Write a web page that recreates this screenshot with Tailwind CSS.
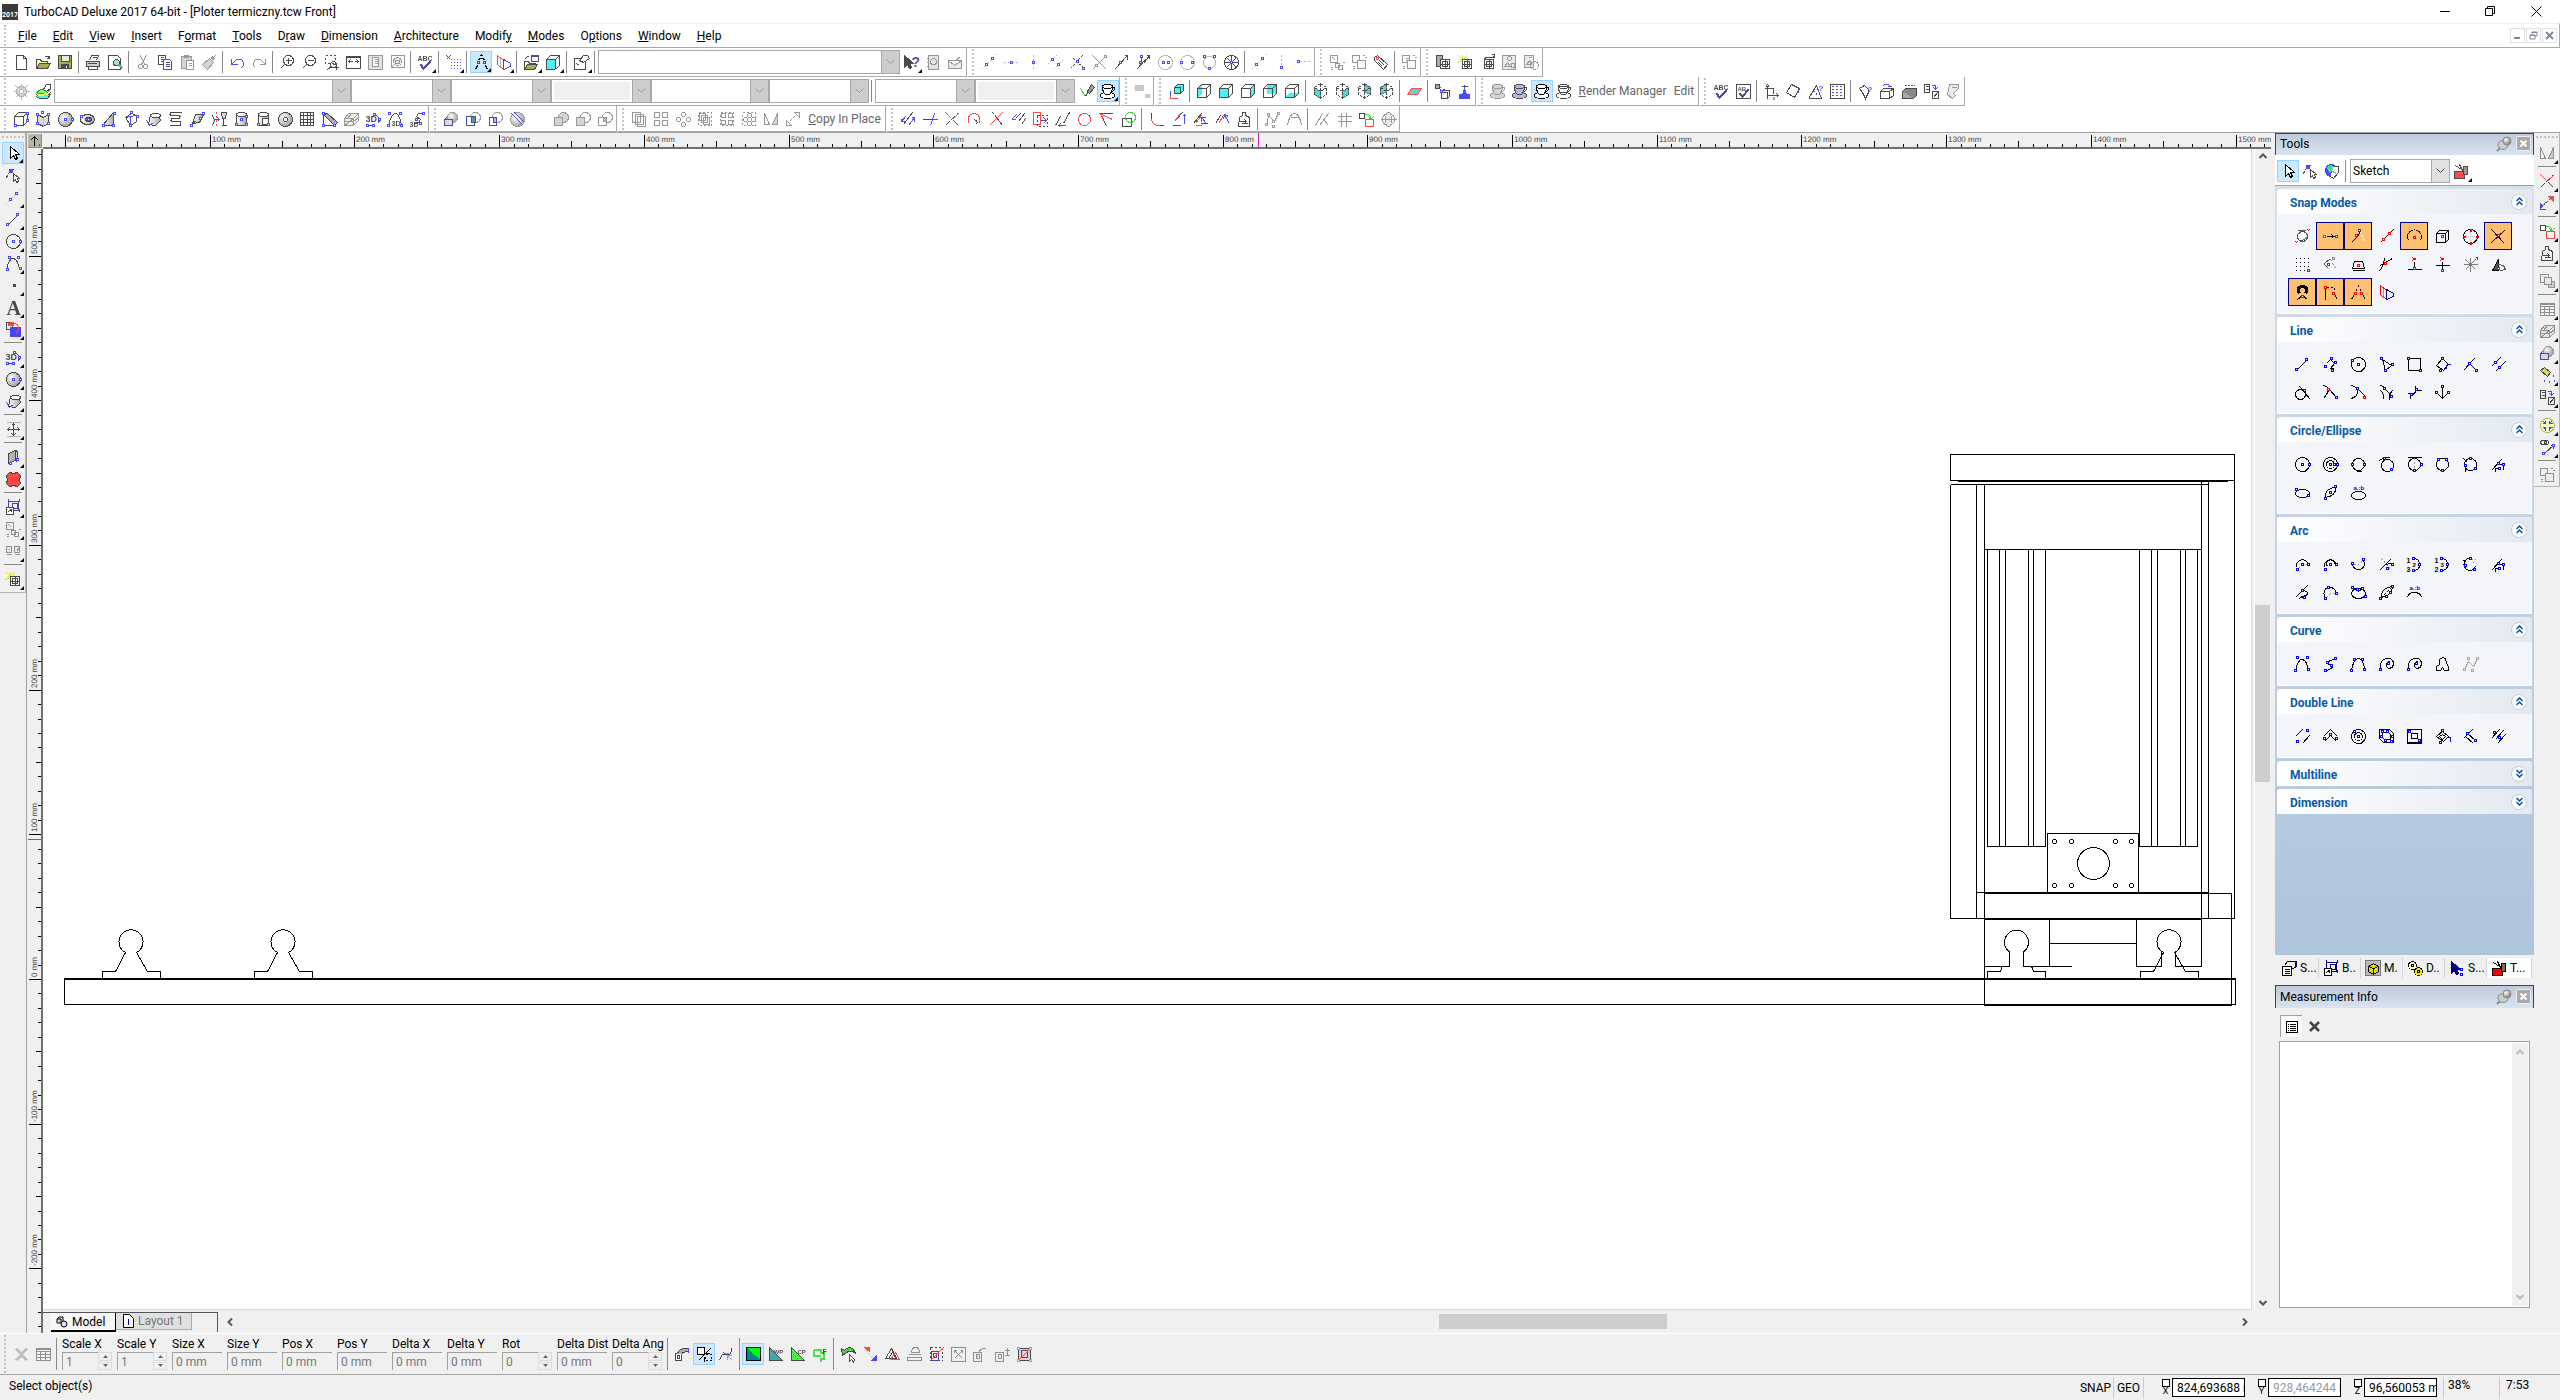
<!DOCTYPE html>
<html lang="en">
<head>
    <meta charset="UTF-8">
    <meta name="viewport" content="width=device-width, initial-scale=1.0">
    <title>TurboCAD Deluxe 2017 64-bit - [Ploter termiczny.tcw Front]</title>
    <script src="https://cdn.jsdelivr.net/npm/@tailwindcss/browser@4"></script>
</head>
<body class="h-screen flex flex-col overflow-hidden bg-[#f0f0f0] text-black text-[12px] leading-4 font-['Roboto','Open_Sans',sans-serif]">

    <svg class="absolute size-0" aria-hidden="true">
        <defs>
            <radialGradient id="ball" cx=".35" cy=".35" r=".7"><stop offset="0" stop-color="#fff"/><stop offset="1" stop-color="#777"/></radialGradient>
            <linearGradient id="steel"><stop offset="0" stop-color="#fff"/><stop offset="1" stop-color="#888"/></linearGradient>
        </defs>
    </svg>

    <!-- Title bar -->
    <header class="flex items-center h-[23px] shrink-0 bg-white">
        <div class="flex items-end justify-center ml-[2px] mr-[6px] size-4 bg-[#3a3a3a] text-white text-[7px] leading-[10px] font-bold">2017</div>
        <h1 class="flex-1">TurboCAD Deluxe 2017 64-bit - [Ploter termiczny.tcw Front]</h1>
        <button class="w-[45px] flex justify-center" aria-label="Minimize"><svg class="size-[11px]" viewBox="0 0 11 11" stroke="#000"><path d="M0 5.500h10"/></svg></button>
        <button class="w-[45px] flex justify-center" aria-label="Restore"><svg class="size-[11px]" viewBox="0 0 11 11" stroke="#000" fill="none"><path d="M.5 2.500h7v7h-7zM2.500 2.500v-2h7v7h-2"/></svg></button>
        <button class="w-[47px] flex justify-center" aria-label="Close"><svg class="size-[11px]" viewBox="0 0 11 11" stroke="#000"><path d="M.5 .5l10 10M10.500 .5l-10 10"/></svg></button>
    </header>

    <!-- Menu bar -->
    <nav class="flex items-center h-[25px] shrink-0 bg-white border-t border-b border-t-[#f0f0f0] border-b-[#aaaaaa] border-r border-r-[#aaaaaa]">
        <span class="w-[10px] self-stretch flex justify-center py-px"><span class="border-l-2 border-dotted border-[#c4c4c4]"></span></span>
        <div id="menu" class="flex-1 flex">
            <button class="px-2"><u>F</u>ile</button>
            <button class="px-2"><u>E</u>dit</button>
            <button class="px-2"><u>V</u>iew</button>
            <button class="px-2"><u>I</u>nsert</button>
            <button class="px-2">F<u>o</u>rmat</button>
            <button class="px-2"><u>T</u>ools</button>
            <button class="px-2">D<u>r</u>aw</button>
            <button class="px-2"><u>D</u>imension</button>
            <button class="px-2"><u>A</u>rchitecture</button>
            <button class="px-2">Modif<u>y</u></button>
            <button class="px-2"><u>M</u>odes</button>
            <button class="px-2">O<u>p</u>tions</button>
            <button class="px-2"><u>W</u>indow</button>
            <button class="px-2"><u>H</u>elp</button>
        </div>
        <div class="flex gap-px mr-[2px]">
            <button class="size-[15px] border border-[#e0e0e0] flex items-center justify-center" aria-label="Minimize document"><svg class="size-[9px]" viewBox="0 0 9 9" stroke="#7a8797" stroke-width="2"><path d="M1 7h6"/></svg></button>
            <button class="size-[15px] border border-[#e0e0e0] flex items-center justify-center" aria-label="Restore document"><svg class="size-[9px]" viewBox="0 0 9 9" stroke="#7a8797" fill="none"><path d="M1 4h5v4h-5zM1 4.500h5M3 3v-2h5v4h-2M3 1.500h5"/></svg></button>
            <button class="size-[15px] border border-[#e0e0e0] flex items-center justify-center" aria-label="Close document"><svg class="size-[9px]" viewBox="0 0 9 9" stroke="#7a8797" stroke-width="2"><path d="M1 1l7 7M8 1l-7 7"/></svg></button>
        </div>
    </nav>

    <!-- Toolbars -->
    <div class="flex h-[29px] shrink-0 bg-white">
        <div data-bar="new open save | print preview | cut- copy paste- brush- | undo redo- | zoomin zoomout zoomwin zoomext page- zoomsel- | abc^ | grid^ | compass!^ mirror^ | export^ cube^ | props^ |">
            <div data-combo class="w-[302px]"></div>
            <div data-icons="help^ book- mail-"></div>
        </div>
        <div data-bar="conline conh conv conpar conperp conx- conarr conarr2 concirc concirc2 concirc3 conhatch | conline coni conr"></div>
        <div data-bar="blk1- blk2- tag | blk3-"></div>
        <div data-bar="lib1 lib2 lib3 lib4- lib5-"></div>
    </div>
    <div class="flex h-[29px] shrink-0 bg-white">
        <div data-bar="gear- layers">
            <div data-combo class="w-[297px]"></div>
            <div data-combo class="w-[100px]"></div>
            <div data-combo class="w-[100px]"></div>
            <div data-combo="off" class="w-[100px]"></div>
            <div data-combo class="w-[118px]"></div>
            <div data-combo class="w-[100px]"></div>
            <div data-icons="|"></div>
            <div data-combo class="w-[100px]"></div>
            <div data-combo="off" class="w-[100px]"></div>
            <div data-icons="dropper cup!^"></div>
        </div>
        <div data-bar="squares-"></div>
        <div data-bar="ucs | cubeL cubeF cubeR cubeB cubeD | iso1 iso2 iso3 iso4 | plane | camera walk"></div>
        <div data-bar="cupgray- cupfill cup! cupline">
            <button class="w-[95px] text-[#666]"><u>R</u>ender Manager</button>
            <button class="w-[28px] text-[#666]">Edit</button>
        </div>
        <div data-bar="abc abcbox | axes rot rot2 halftone | turn boxup brick swap script-"></div>
    </div>
    <div class="flex h-[27px] shrink-0 bg-white border-b border-[#a0a0a0] *:pt-px">
        <div data-bar="box polybox sphere spin cone prism roll spring sweep glass cylN cylR torus mesh wedge latt- poly3d curve3d spline3d"></div>
        <div data-bar="u1 u2 u3 slice _ s1- s2- s3-"></div>
        <div data-bar="arr1- arr2- arr3- arr4- arr5- arr6- arr7- arr8-">
            <button class="w-[81px] text-[#666]"><u>C</u>opy In Place</button>
        </div>
        <div data-bar="m1 m2 m3 m4 m5 m6 m7 m8 m9 m10 m11 | f1 f2 f3 f4 f5 | f6- f7- | f8- f9- f10 f11-"></div>
    </div>

    <!-- Middle: left tools, drawing, panels, right tools -->
    <div class="flex-1 min-h-0 flex">
        <aside class="w-[26px] shrink-0">
            <div class="bg-[#f0f0f0] border-r border-b border-[#b4b4b4] pb-[2px]" data-col="cursor!^ editnode conline^ line^ circle^ curve^ point^ textA^ hatch^ | poly3d^ sphere^ roll^ | dim^ | wall^ blob^ | group^ blk1-^ pair-^ | lib2^"></div>
        </aside>

        <main class="flex-1 min-w-0 grid grid-cols-[15px_1fr_19px] grid-rows-[16px_1fr_23px] border-l border-[#a0a0a0] pl-px">
            <div class="bg-[#b5b5a5] border-r border-b border-[#888] p-px mt-px mr-px mb-px">
                <svg class="size-[12px]" viewBox="0 0 12 12" stroke="#000" fill="none"><path d="M5.500 11v-9M2 5l3.500-3.500 3.500 3.500M10 10h1"/></svg>
            </div>
            <div class="col-span-2 border-b-2 border-[#707070] overflow-hidden"><svg id="hruler" class="w-full h-[14px]" shape-rendering="crispEdges"></svg></div>
            <div class="row-span-2 border-r-2 border-[#707070] overflow-hidden"><svg id="vruler" class="w-[13px] h-full" shape-rendering="crispEdges"></svg></div>
            <div class="bg-white border-r border-b border-[#dcdcdc] overflow-hidden">
                <svg class="w-full h-full" fill="none" stroke="#000" shape-rendering="crispEdges">
                    <g transform="translate(-43 -149)">
                        <!-- long bed -->
                        <path stroke-width="2" d="M64 979H2236"/>
                        <path d="M64.500 979V1004.500H2235.500V979"/>
                        <!-- rails -->
                        <g id="rail"><path d="M125.500 952.500A12 12 0 1 1 136.500 952.500L147.500 971.500H160.500V979M125.500 952.500L115.500 971.500H102.500V979"/></g>
                        <use href="#rail" x="152"/>
                        <use href="#rail" x="2038"/>
                        <!-- gantry top -->
                        <path d="M1950.500 454.500H2234.500V480.500H1950.500zM1951 484.500H2208M1950.500 485V918.500H2234.500V480M1976.500 484V918M1984.500 484V1005M2201.500 480V966M2208.500 480V918"/>
                        <path stroke-width="2" d="M1958 481H2228M1984 893H2208M1984 919H2201M1984 1005H2232"/>
                        <path d="M1976 892.500H1984M2208 893.500H2231.500V1005M1984 549.500H2201"/>
                        <!-- profiles -->
                        <path d="M1987.500 549V846.500H2045.500V549M1999.500 549V846M2005.500 549V846M2028.500 549V846M2033.500 549V846"/>
                        <path d="M2139.500 549V846.500H2197.500V549M2151.500 549V846M2157.500 549V846M2180.500 549V846M2185.500 549V846"/>
                        <!-- motor -->
                        <path d="M2047.500 833.500H2138.500V892H2047.500z"/>
                        <circle cx="2093.500" cy="863.500" r="16"/>
                        <g><circle cx="2054.500" cy="841.500" r="2"/><circle cx="2071.500" cy="841.500" r="2"/><circle cx="2115.500" cy="841.500" r="2"/><circle cx="2131.500" cy="841.500" r="2"/><circle cx="2054.500" cy="885.500" r="2"/><circle cx="2071.500" cy="885.500" r="2"/><circle cx="2115.500" cy="885.500" r="2"/><circle cx="2131.500" cy="885.500" r="2"/></g>
                        <!-- carriages -->
                        <path d="M2049.500 919V966M2136.500 919V966.500H2161.500V952M2201.500 966.500H2175.500V952M2049 943.500H2136"/>
                        <path d="M1984 966.500H2009.500V952A12 12 0 1 1 2023.500 952V966.500H2072M2002.500 966L2000.500 971.500H1987.500V979M2031.500 966L2033.500 971.500H2045.500V979"/>
                    </g>
                </svg>
            </div>
            <div class="flex flex-col items-center ml-[2px] mr-px bg-[#f0f0f0] border-l border-white">
                <svg class="w-[8px] h-[15px] shrink-0" viewBox="0 0 8 15" fill="none" stroke="#555" stroke-width="2"><path d="M.5 9L4 5.500 7.500 9"/></svg>
                <div class="basis-[441px]"></div>
                <div class="w-full basis-[177px] bg-[#cdcdcd]"></div>
                <div class="flex-1"></div>
                <svg class="w-[8px] h-[15px] shrink-0" viewBox="0 0 8 15" fill="none" stroke="#555" stroke-width="2"><path d="M.5 6L4 9.500 7.500 6"/></svg>
            </div>
            <div class="col-span-2 flex items-start pt-[2px]">
                <div class="flex items-start h-[20px] w-[175px] border-t border-r border-[#555] pl-[8px]" role="tablist">
                    <button role="tab" class="flex items-center gap-[4px] h-[19px] w-[65px] pl-[5px] bg-[#f6f6f6] border-b-2 border-r border-black">
                        <svg class="size-[12px]" viewBox="0 0 12 12" stroke="#000" fill="#ddd"><path d="M1 3l2-2h4v4l-2 2h-4zM1 3h4v4"/><circle cx="8" cy="8" r="3"/></svg>Model</button>
                    <button role="tab" class="flex items-center gap-[4px] h-[17px] w-[76px] pl-[7px] bg-[#e0e0e0] border-b border-r border-[#aaa] text-[#777]">
                        <svg class="w-[11px] h-[14px]" viewBox="0 0 11 14" stroke="#000" fill="#fff"><path d="M.5 .5h6l4 4v9h-10z"/><path stroke="#00c" d="M5.500 5v6"/></svg>Layout 1</button>
                </div>
                <div class="flex-1 flex items-center h-[19px] pl-[7px] pr-[21px]">
                    <svg class="w-[10px] h-[8px]" viewBox="0 0 10 8" fill="none" stroke="#555" stroke-width="2"><path d="M7 .5L3.500 4 7 7.500"/></svg>
                    <div class="grow-[1203]"></div>
                    <div class="w-[228px] h-[15px] bg-[#cdcdcd]"></div>
                    <div class="grow-[572]"></div>
                    <svg class="w-[10px] h-[8px]" viewBox="0 0 10 8" fill="none" stroke="#555" stroke-width="2"><path d="M3 .5L6.500 4 3 7.500"/></svg>
                </div>
            </div>
        </main>

        <aside class="w-[263px] shrink-0 pl-[4px] flex flex-col">
            <!-- Tools panel -->
            <section class="flex flex-col">
                <div class="flex items-center h-[22px] pl-[4px] pr-[2px] pb-[2px] border-t border-x border-[#444] bg-linear-to-b from-[#bccadb] to-[#d9e4f0]">
                    <h2 class="flex-1">Tools</h2>
                    <div data-head></div>
                </div>
                <div class="flex items-center h-[31px] pl-[2px] pt-[2px] bg-white border-b border-[#a0a0a0]">
                    <div data-icons="cursor! editnode world |"></div>
                    <div data-combo="Sketch" class="w-[100px] ml-px"></div>
                    <div data-icons="bag^"></div>
                </div>
                <div id="groups" class="flex flex-col gap-[3px] px-[2px] pt-[3px] pb-[141px] bg-linear-to-b from-[#d6dfea] to-[#afc5dc]"></div>
            </section>
            <div id="ptabs" class="flex pl-[2px] pt-[3px] h-[28px] shrink-0" role="tablist"></div>
            <!-- Measurement panel -->
            <section class="flex-1 flex flex-col pt-[2px] pb-[25px]">
                <div class="flex items-center h-[23px] pl-[4px] pr-[2px] pb-px border-t border-x border-[#444] bg-linear-to-b from-[#bccadb] to-[#d9e4f0]">
                    <h2 class="flex-1">Measurement Info</h2>
                    <div data-head></div>
                </div>
                <div class="flex items-center pl-[5px] pt-[6px] pb-[3px]">
                    <button class="size-[22px] flex items-center justify-center bg-[#f8f8f8] border-t border-l border-[#a0a0a0]" aria-label="List"><svg class="size-[12px]" viewBox="0 0 12 12" fill="none" stroke="#000" shape-rendering="crispEdges"><path d="M.5 .5h11v11h-11zM2 3.500h1M4 3.500h6M2 5.500h1M4 5.500h6M2 7.500h1M4 7.500h6M2 9.500h1M4 9.500h6"/></svg></button>
                    <button class="size-[24px] flex items-center justify-center" aria-label="Clear"><svg class="size-[11px]" viewBox="0 0 11 11" stroke="#444" stroke-width="2.500"><path d="M1 1l9 9M10 1l-9 9"/></svg></button>
                </div>
                <div class="flex-1 flex ml-[4px] mr-[4px] bg-white border border-[#a0a0a0]">
                    <textarea class="flex-1 resize-none outline-none" aria-label="Measurement Info"></textarea>
                    <div class="w-[16px] mr-px my-px py-[6px] bg-[#f0f0f0] flex flex-col items-center justify-between">
                        <svg class="w-[8px] h-[6px]" viewBox="0 0 8 6" fill="none" stroke="#bbb" stroke-width="2"><path d="M.5 5L4 1.500 7.500 5"/></svg>
                        <svg class="w-[8px] h-[6px]" viewBox="0 0 8 6" fill="none" stroke="#bbb" stroke-width="2"><path d="M.5 1L4 4.500 7.500 1"/></svg>
                    </div>
                </div>
            </section>
        </aside>

        <aside class="w-[26px] shrink-0">
            <div class="border-r border-b border-[#b4b4b4]" data-col="arr7-^ | m3^ swapc^ | f10^ f5^ | back-^ | table-^ latt-^ u1^ torch^ swap^ | snapin^ route^ | blk2-"></div>
        </aside>
    </div>

    <!-- Inspector bar -->
    <div class="flex items-center h-[42px] shrink-0 border-t border-t-white border-b border-b-[#a8a8a8]">
        <span class="w-[10px] self-stretch flex justify-center py-px"><span class="border-l-2 border-dotted border-[#c4c4c4]"></span></span>
        <div data-icons="del- table-"></div>
        <span class="w-px h-[32px] ml-[2px] mr-[5px] bg-[#888]"></span>
        <form id="fields" class="flex self-start pt-[2px]"></form>
        <span class="w-px h-[32px] mr-[3px] bg-[#888]"></span>
        <div data-icons="e1 e2! e3"></div>
        <span class="w-px h-[32px] mx-[2px] bg-[#888]"></span>
        <div data-icons="w1! w2 w3 w4"></div>
        <span class="w-px h-[32px] mx-[3px] bg-[#888]"></span>
        <div data-icons="k1 k2 k3 k4- k5 k6- k7- k8- k9"></div>
    </div>

    <!-- Status bar -->
    <footer class="flex items-center h-[25px] shrink-0 pl-[9px]">
        <span class="flex-1 pb-[3px]">Select object(s)</span>
        <button class="h-[22px] w-[36px] border-r border-[#ccc]">SNAP</button>
        <button class="h-[22px] w-[30px] border-r border-[#ccc]">GEO</button>
        <div id="coords" class="flex gap-[12px] ml-[17px] mr-[6px]"></div>
        <span class="h-[22px] w-[56px] pl-[4px] border-l border-[#ccc]">38%</span>
        <span class="h-[22px] w-[61px] pl-[6px] border-l border-[#ccc]">7:53</span>
    </footer>

<script>
    const p = (d, c = '#000', f = 'none', x = '') => `<path d="${d}" stroke="${c}" fill="${f}" ${x}/>`;
    const dash = (d, c = '#000') => p(d, c, 'none', 'stroke-dasharray="2 2"');
    const c = (x, y, r, s = '#000', f = 'none') => `<circle cx="${x}" cy="${y}" r="${r}" stroke="${s}" fill="${f}"/>`;
    const el = (x, y, rx, ry, s = '#000', f = 'none') => `<ellipse cx="${x}" cy="${y}" rx="${rx}" ry="${ry}" stroke="${s}" fill="${f}"/>`;
    const t = (x, y, s, z = 6, f = '#000') => `<text x="${x}" y="${y}" font-size="${z}" fill="${f}" font-weight="bold" font-family="Liberation Sans, sans-serif">${s}</text>`;
    // small square handles at each x,y pair
    const n = (pts, col = '#00f') => pts.split(' ').map(s => { const [x, y] = s.split(','); return p(`M${x - 1} ${y - 1}h2v2h-2z`, col, '#fff'); }).join('');
    const R = '#f00', B = '#00f', G = '#999', N = '#000080', C = '#0ee';
    const cubeBase = p('M1 5h9v9h-9zM1 5l4-4h9v9l-4 4M10 5l4-4');
    const cupBase = f => el(7, 12, 7, 3, '#000', f) + p('M2 3q0 6 3 8h4q3-2 3-8z', '#000', f) + el(7, 3, 5, 2, '#000', f) + p('M12 4q3 0 2 2t-4 3');
    const blocks = p('M1 1h7v7h-7z') + p('M6 6h8v8h-8z', '#000', '#eee') + p('M11 1h2M1 12h2M1 14h2M13 3h2');
    const target = p('M5 5h9v9h-9z', '#000', '#fff') + c(9.500, 9.500, 3) + p('M10 5v9M5 10h9');
    const iso = f => p(f, '#088', '#0cc') + p('M8 0l6 4v7l-6 4-6-4v-7zM8 0v15M2 4l6 4 6-4', '#000', 'none', 'stroke-dasharray="3 1"');

    const icons = {
        cursor: p('M5 1v12l3-3 2 4 2-1-2-4h4z', '#000', '#fff'),
        new: p('M3 1h7l3 3v11h-10zM10 1v3h3', '#000', '#fff'),
        open: p('M1 14v-9h4l1 2h6v3', '#000', '#ff9') + p('M1 14l3-5h11l-3 5z', '#000', '#880') + p('M9 3q3-3 5 1M14 1v3h-3'),
        save: p('M1 1h13v13h-13z', '#000', '#880') + p('M4 1h8v6h-8z', '#000', '#ddd') + p('M4 10h7v4h-7z', '#000', '#000') + p('M9 11v2', '#fff'),
        print: p('M4 6l2-5h7l-2 5', '#000', '#fff') + p('M1 7h13v5h-13z', '#000', '#bbb') + p('M3 12v3h9v-3M7 3h4M2 9h9', '#000', '#fff'),
        preview: p('M1 1h9l3 3v11h-12z', '#000', '#fff') + c(9, 8, 3, '#000', '#8cc') + p('M11 10l4 4', '#088', 'none', 'stroke-width="2"'),
        cut: p('M5 1l4 9M11 1l-5 9') + c(5, 12, 2) + c(10, 12, 2),
        copy: p('M1 1h7v9h-7z', '#000', '#fff') + p('M6 5h6l2 2v8h-8z', N, '#fff') + p('M3 3h3M3 5h2M3 7h2M8 8h4M8 10h4M8 12h4', N),
        paste: p('M2 2h10v12h-10z', '#000', '#999') + p('M5 1h4v2h-4z') + p('M7 6h7v9h-7z', '#000', '#fff') + p('M9 9h3M9 11h3'),
        brush: p('M14 1l-4 4M8 4l4 4-6 7-5-5z', '#000', '#999') + p('M10 5l2-2', '#000', 'none', 'stroke-width="3"'),
        undo: p('M2 4v6h6M2 10l5-5q6-2 7 4q0 3-2 4', B),
        redo: p('M14 4v6h-6M14 10l-5-5q-6-2-7 4q0 3 2 4'),
        zoomin: c(9, 6, 5) + p('M5 10l-4 4M6 6h6M9 3v6'),
        zoomout: c(9, 6, 5) + p('M5 10l-4 4M6 6h6'),
        zoomwin: dash('M2 1h10v8h-10z') + c(10, 10, 3) + p('M8 12l-4 3M9 10h3M13 11v4M11 13h4'),
        zoomext: p('M1 2h14v12h-14z', '#000', '#fff') + p('M1 3h14', '#000') + p('M3 7h4M5 5l-2 2 2 2M13 7h-4M11 5l2 2-2 2', N),
        page: p('M1 1h14v14h-14z', '#000', '#bbb') + p('M5 3h6v9h-6z', '#000', '#fff') + p('M7 5h3M7 7h3M7 9h3'),
        zoomsel: p('M2 1h13v12h-13z') + c(8, 7, 4, '#000', '#ccc') + p('M5 10l-4 4M6 6h4v3h-4z'),
        abc: t(0, 6, 'ABC', 7) + p('M3 10l3 4 7-7', N, 'none', 'stroke-width="2"'),
        abcbox: p('M1 1h14v14h-14z') + t(2, 7, 'AB', 6) + p('M4 10l3 3 6-7', N, 'none', 'stroke-width="2"'),
        grid: p('M1 1l4 4M5 1l-4 4') + [4, 7, 10, 13].map(y => p(`M5 ${y + 1}h11`, B, 'none', 'stroke-dasharray="1 2"')).join(''),
        compass: dash('M8 0l-4 8M8 0l4 8') + p('M4 11l-2 4M12 11l2 4M6 4h4') + n('5,8 11,8', R),
        mirror: p('M2 1l6 5v9l-6-5z', R) + p('M5 4v8', G) + p('M8 5l7 4v3l-7 3z', N),
        export: p('M8 1h7v6h-7z', N, '#fff') + p('M8 2h7', N) + p('M1 14v-7h4l1 2h6v2', '#000', '#ff9') + p('M1 15l3-5h10l-3 5z', '#000', '#880') + p('M2 5q1-4 4-3'),
        cube: p('M1 5h9v10h-9z', '#000', C) + p('M1 5l4-4h9l-4 4zM14 1v10l-4 4', '#000', '#fff'),
        props: p('M1 4h11v11h-11z', '#000', '#fff') + p('M6 6l4-5h4l2 3-6 4z', '#000', '#fff') + p('M3 9l3 2'),
        help: p('M1 1v12l3-3 2 4 2-1-2-4h4z', '#000', '#000') + t(8, 12, '?', 14, N),
        book: p('M3 1h10v14h-10z', '#000', '#bbb') + c(8, 7, 3) + p('M3 4h-2M3 8h-2M3 12h-2'),
        mail: p('M1 6h13v8h-13zM1 6l6 5 7-5M8 6l5-4', '#000', '#ccc'),
        conline: dash('M0 15L15 0', G) + n('5,10 11,4'),
        conh: dash('M0 8h16', G) + n('8,8'),
        conv: dash('M8 0v16', G) + n('8,8'),
        conpar: dash('M0 10l9-9M6 15l9-9', G) + n('5,5 11,10'),
        conperp: dash('M1 14L13 1M4 4l10 9') + n('8,7 14,14'),
        conx: p('M1 1l14 14M15 1l-14 14') + n('5,11 14,2', '#000'),
        conarr: p('M1 15L14 1M14 5v-4h-3') + n('7,8'),
        conarr2: p('M1 15L10 5M6 2v8M14 1l-6 8M14 4v-3h-3') + n('6,2 5,8'),
        concirc: c(8, 8, 7, G) + n('6,8 11,8'),
        concirc2: c(8, 8, 7, G) + n('2,8 13,8'),
        concirc3: c(8, 8, 6, G) + n('3,2 13,2 8,14'),
        conhatch: c(8, 8, 7) + p('M3 3l10 10M13 3l-10 10M8 1v14M1 8h14') + n('8,8'),
        coni: dash('M8 0v16', G) + n('8,13'),
        conr: dash('M4 7h12', G) + n('3,7'),
        blk1: p('M1 1h7v7h-7zM3 3l3 3') + p('M6 9h4v4h-4zM9 11h4v4h-4z') + p('M1 13h2M1 15h2M13 8h2'),
        blk2: blocks, blk3: blocks + p('M4 4h3M4 6h2'),
        tag: p('M1 3l3-2 10 9-4 5-9-9z', '#000', '#fff') + c(4, 4, 1, R) + p('M6 6l5 5M5 8l4 4'),
        lib1: p('M1 1h6v11h-6z', '#000', '#888') + target,
        lib2: p('M1 1l5 5M5 0v4M1 5h4M9 1l-3 4M0 8l4-2', '#dd0') + target,
        lib3: target + p('M5 5l1-2h8l1-2M12 0h3v3', '#000'),
        lib4: p('M1 1h13v14h-13z', '#000', '#ccc') + c(8, 4, 2) + p('M3 12l3-4 3 4zM10 9h3v4h-3z'),
        lib5: p('M1 1h9v12h-9z', '#000', '#ccc') + c(11, 11, 4) + p('M3 10l3-4 2 4zM5 3h3'),
        gear: c(8, 8, 5, '#444', '#998') + c(8, 8, 2, '#444', '#fff') + p('M8 0v3M8 13v3M0 8h3M13 8h3M2 2l3 3M14 2l-3 3M2 14l3-3M14 14l-3-3', '#444'),
        layers: p('M1 9l4-3h10l-4 4h-8z', '#060', '#3f3') + p('M1 11l2 2h9l3-4', '#000', '#ff0') + p('M1 13l3 2h8l3-4', '#000', C) + p('M8 6l3-5h4v4l-4 3z', '#000', '#fff'),
        dropper: p('M2 5l5 8', '#0b0') + p('M7 13l3-5') + p('M9 8l4-7 3 3-5 6z', '#000', '#777'),
        cup: cupBase('#fff'), cupgray: cupBase('#999'), cupfill: cupBase('#99c'), cupline: cupBase('none'),
        squares: p('M1 2h8v5h-8z', '#777', '#777') + p('M11 11h4v3h-4z', '#777', '#777'),
        ucs: p('M6 4h6v6h-6zM6 4l3-3h6v6l-3 3', '#000', C) + p('M2 7v8h7', R) + p('M2 7v4', B),
        cubeL: p('M1 5l4-4v9l-4 4z', C, C) + cubeBase,
        cubeF: p('M1 5h9v9h-9z', C, C) + cubeBase,
        cubeR: cubeBase + p('M10 5l4-4v9l-4 4z', '#000', C),
        cubeB: p('M5 1h9v9h-9z', C, C) + cubeBase,
        cubeD: p('M1 14l4-4h9l-4 4z', C, C) + cubeBase,
        iso1: iso('M2 4l6 4v7l-6-4z'), iso2: iso('M8 8l6-4v7l-6 4z'), iso3: iso('M8 1l6 3v7l-6-3z'), iso4: iso('M2 4l6-3v7l-6 3z'),
        plane: p('M1 11l4-6h10l-4 6z', R, '#0cc'),
        camera: p('M1 1h4v4h-4zM5 5l4 4', '#000', '#888') + dash('M5 3l9 6', B) + p('M7 9h6v6h-6zM7 9l2-2h6v6l-2 2', '#000', '#eee') + n('7,8'),
        walk: p('M8 1v5M5 3h6', '#000') + p('M8 5l-2 6h-3v4h10v-4h-3z', B, B),
        axes: p('M4 15v-13M2 4l2-3 2 3M1 5h9v5M4 12h11M13 10l2 2-2 2') + t(9, 16, 'x', 5, B),
        rot: p('M1 9l5-8 8 4-5 9z') + dash('M12 10q4-4 1-7', B),
        rot2: p('M1 15h13M1 15l8-13 5 13') + dash('M5 8q4 0 5 6', B) + t(11, 7, '?', 8, B),
        halftone: p('M1 1h14v14h-14z', '#000', '#ffd') + [3, 6, 9, 12].map(y => dash(`M2 ${y}h12`, B)).join(''),
        turn: p('M2 5l5-3 4 4v3l-3 6-3-6z') + t(10, 8, '?', 8, B),
        boxup: p('M1 8h9v7h-9zM1 8l3-3h10v7l-4 3M10 8l4-3') + p('M4 2q4-3 7 1M8 3h4', B),
        brick: p('M1 8h11v7h-11z', '#000', '#888') + p('M1 8l3-3h11v7l-3 3', '#000', '#555') + p('M3 2h10', B, 'none', 'stroke-dasharray="2 1"'),
        swap: p('M1 1h5v8h-5zM2 3h3M2 6h3') + p('M9 8h6v7h-6zM10 14l4-5') + p('M8 2h4v4M10 4l2 2 2-2', B),
        script: p('M4 1h9v4l-5 5 2 2-3 3-5-4z', '#000', '#ccc') + p('M6 4h5'),
        box: p('M1 5h9v9h-9z', '#000', '#fff') + p('M1 5l4-4h9v9l-4 4M10 5l4-4') + n('2,14 14,2 14,9'),
        polybox: p('M2 3l6 3 5-3v9l-5 3-6-3z', '#000', '#ccc') + p('M8 6v9', C) + n('2,3 13,3 2,12 13,12 7,1'),
        sphere: c(8, 8, 7, '#000', 'url(#ball)') + n('8,8 15,8'),
        spin: el(8, 8, 7, 5, '#000', 'url(#steel)') + el(9, 8, 3, 2, '#000', '#555') + n('2,5 9,8'),
        cone: p('M1 14l11-13v13z', '#000', 'url(#steel)') + n('13,2 12,14 2,14'),
        prism: p('M2 6l5 8 6-4v-6l-5-2z', '#000', '#fff') + p('M2 6l5-1 6-1M7 14v-9', B) + n('8,1 14,5 7,14'),
        roll: p('M5 3l8 1 2 5-5 5-7-1z', '#000', 'url(#steel)') + el(10, 4, 5, 2, '#000', '#fff') + p('M1 9l3 5 4-3', B),
        spring: p('M14 1h-11v3h9v3h-8v3h9v4h-11M2 2v1M12 5h1M3 8v1'),
        sweep: p('M6 3h8l-4 8-7 1z', '#000', 'url(#steel)') + p('M3 12l4-3') + n('14,2 2,14 11,7'),
        glass: dash('M5 0v16', R) + p('M10 1h5l-1 6h-3zM12 7v7M10 14h5M1 4l2 5-2 5', '#000', '#ccc') + p('M3 8h5M6 6l2 2-2 2', B),
        cylN: p('M3 3v10q5 3 10 0v-10', '#000', 'url(#steel)') + el(8, 3, 5, 2, '#000', '#fff') + n('8,8 13,5 13,13 3,13'),
        cylR: p('M3 3v10q5 3 10 0v-10', '#000', 'url(#steel)') + el(8, 3, 5, 2, '#000', '#fff') + p('M7 7h6v6h-6z', '#000', '#fff') + n('13,13 3,13'),
        torus: c(8, 8, 7, '#000', 'url(#ball)') + c(8, 8, 2, '#000', '#fff'),
        mesh: p('M1 1h13v13h-13zM4 1v13M8 1v13M11 1v13M1 4h13M1 8h13M1 11h13'),
        wedge: p('M2 3l11 11h-11z', '#000', '#fff') + p('M2 3l4-1 10 9-3 3', '#000', '#888') + n('2,2 2,14 13,14'),
        latt: p('M1 7h9v7h-9zM1 7l4-5h10v7l-5 5M10 7l5-5M1 10h9l5-4M4 7l4-5M1 14l9-7', '#000', '#ddd'),
        poly3d: t(0, 10, '3D', 9) + p('M2 14h6M10 3l5 5-3 4') + n('2,14 8,14 14,8 9,3'),
        curve3d: p('M1 14Q4 2 8 2T14 14') + t(4, 14, '3D', 7) + n('1,14 14,14 2,2 13,2'),
        spline3d: p('M14 2h-5l-2 3 4 3-2 3-4 1') + t(0, 15, '3D', 7) + n('14,2 7,8 11,12'),
        u1: p('M1 14v-6l4-4h8', '#000', '#ccd') + c(9, 6, 5, '#777', 'url(#ball)') + p('M1 8h8v6h-8z', N, '#ccd'),
        u2: c(10, 6, 5, '#777', '#fff') + p('M1 5h8v9h-8z', N, '#fff') + p('M6 5h4v6h-4z', N, '#077'),
        u3: c(10, 6, 5, '#777', '#fff') + p('M2 6h7v8h-7z', N, '#fff') + p('M6 6h3v5h-3z', N, '#99f'),
        slice: c(8, 8, 7, '#777', 'url(#ball)') + p('M2 2l12 12M5 1l10 10', N) + p('M3 1l12 13', '#fff'),
        s1: c(10, 6, 5, '#000', '#999') + p('M1 6h8v8h-8z', '#000', '#999'),
        s2: c(10, 6, 5) + p('M1 6h8v8h-8z', '#000', '#999'),
        s3: c(10, 6, 5) + p('M1 6h8v8h-8z', '#000', '#fff') + p('M6 6h3v4h-3z', '#000', '#555'),
        arr1: p('M1 1h8v10h-8zM4 3h8v10h-8zM6 5h8v10h-8z'),
        arr2: p('M1 1h5v5h-5zM9 1h5v5h-5zM1 9h5v5h-5zM9 9h5v5h-5z'),
        arr3: c(8, 3, 2) + c(3, 8, 2) + c(13, 8, 2) + c(8, 13, 2),
        arr4: dash('M1 1h13v13h-13z') + p('M2 2h6v7h-6zM4 4h6v7h-6zM6 6h6v7h-6z', '#000', '#fff'),
        arr5: dash('M1 1h13v13h-13z') + p('M2 2h4v4h-4zM9 2h4v4h-4zM2 9h4v4h-4zM9 9h4v4h-4z'),
        arr6: dash('M1 1h13v13h-13z') + c(8, 4, 2) + c(4, 8, 2) + c(12, 8, 2) + c(8, 12, 2) + c(8, 8, 2),
        arr7: p('M1 2v11h5zM1 2l5 11') + p('M14 2v11h-5z', '#000', '#999'),
        arr8: p('M1 9l5 5h-5zM9 1l5 5v-5z') + dash('M2 12l10-10'),
        m1: p('M3 13l9-12') + p('M1 10l4-5M8 14l6-8M1 7v3h3M14 10v-4h-3', B),
        m2: p('M0 8h10') + p('M8 14l4-12M9 8h6', B),
        m3: p('M9 9l5 5') + p('M1 1l6 6', R) + p('M1 14L13 2', '#000', 'none', 'stroke-dasharray="6 2"') + p('M8 8l6-6', R),
        m4: p('M3 12A6 6 0 1 1 12 12', R) + p('M8 8q4 2 2 5'),
        m5: dash('M4 1l4 5') + p('M8 6l6 8') + p('M14 1L1 14', R),
        m6: p('M5 7l5-5M8 10l6-8M11 13l4-6') + p('M1 8h4M1 8l5-5', B),
        m7: p('M1 1h7v12h-7z', R) + dash('M5 4h10v11h-10z') + p('M8 9h6M11 6l3 3-3 3', N),
        m8: p('M1 14l5-9M9 12l6-11') + p('M4 14h7M6 12l-2 2 2 2', B),
        m9: c(8, 8, 6, R) + p('M13 4l1 3'),
        m10: p('M2 2h12M4 6l4 9', '#000') + p('M1 2l13 6M2 2l3 6', R),
        m11: p('M2 7h9v8h-9z') + c(10, 6, 5, '#0b0'),
        f1: p('M3 1v7', '#000') + p('M3 8q1 6 8 6', R) + p('M11 14h4'),
        f2: p('M4 10l8-9M2 14h8', '#000') + p('M4 10l6-8', R) + p('M14 3v9M12 5l2-2 2 2M3 14h7', B),
        f3: p('M1 12l8-10M8 12h7', '#000') + p('M3 12l6-8M3 14h6', R) + p('M14 12l-5-6M9 10v-4h4', B),
        f4: p('M1 12l5-8') + p('M4 12l5-8', R) + p('M15 12l-4-7M9 8l1-5 4 2', B),
        f5: p('M3 6l3-2v-3h3v3l4 2v9h-11zM3 10h7M8 8l2 2-2 2') + p('M5 12h6'),
        f6: p('M2 14l2-10 6 6 4-8') + n('4,3 2,13 9,10 14,2 9,15'),
        f7: p('M1 14Q3 2 8 2T15 14M4 6h8'),
        f8: p('M1 14l7-12M5 14l9-12M9 8l5 6'),
        f9: p('M5 1v14M10 1v14M1 5h14M1 10h14'),
        f10: p('M1 2h5v5h-5z', '#000', '#fff') + p('M7 3q5-1 5 4M10 5l2 3 3-3', '#0b0') + p('M7 8h8v7h-8z', R, '#fff'),
        f11: c(8, 8, 6) + el(8, 8, 3, 7, '#000', '#ccc') + p('M0 8h16'),
        editnode: p('M1 11Q2 5 9 1', '#000', 'none', 'stroke-dasharray="4 1"') + p('M4 2h3v3h-3z', B, B) + p('M8 6v8l2-2 1 3 2-1-1-3h2z', '#000', '#fff'),
        line: p('M3 13L13 3') + n('2,13 12,3'),
        circle: c(8, 8, 7) + n('8,8 15,8'),
        curve: p('M1 14Q4 2 8 3T14 13') + n('2,14 15,13 4,2 13,2'),
        point: c(9, 8, 1, '#000', '#000'),
        textA: `<text x="1" y="15" font-size="20" font-weight="bold" fill="#000" font-family="Liberation Serif, serif">A</text>`,
        hatch: p('M1 1h6v7h-6z') + p('M3 2h5v2h-5z', R, R) + p('M5 6h10v9h-10z', B, B) + p('M5 1q11 1 7 9l-2 3', R),
        dim: p('M1 1h14M1 15h14', G) + p('M8 2v12M2 8h12M6 4l2-2 2 2M6 12l2 2 2-2M4 6l-2 2 2 2M12 6l2 2-2 2'),
        wall: p('M3 4l7-3v10l-7 3z', '#000', '#999') + p('M10 1l2 1v9l-2 2', '#000', '#ccc') + n('5,14 12,10'),
        blob: p('M4 1l4 1 4-1 3 3-1 4 1 4-3 3-4-1-4 1-3-3 1-4-1-4z', '#000', R),
        group: p('M3 2h10v9h-10z', N) + p('M2 1h1M13 1h1M13 11h1M2 11h1', N, 'none', 'stroke-width="3"') + p('M7 4h5v5h-5z', N) + p('M1 8h7v7h-7z', '#000', '#fff') + p('M3 12l3-2M4 10h2v2'),
        pair: p('M1 3h5v6h-5zM9 3h5v6h-5zM1 11h5M9 11h5M3 6h1M11 8l3-4', '#000', '#ddd'),
        swapc: p('M1 14v-6l2 2 3-3M1 14h5z', B, B) + p('M14 1h-5l5 5z', R, R) + dash('M4 10l8-8', '#000'),
        back: p('M1 1h8v8h-8z') + p('M9 8h6v6h-6z', '#000', '#999') + p('M5 4h7v7h-7z', '#000', '#ddd'),
        table: p('M1 2h14v12h-14z', '#000', '#fff') + p('M1 5h14M1 8h14M1 11h14M5 5v9M10 5v9') + p('M1 3h14'),
        torch: p('M1 3l4-3 6 5-3 4z', '#000', '#cc3') + p('M8 9l3-4') + p('M4 13h1M9 14h1M13 8h1M14 13h1', B, 'none', 'stroke-width="2"'),
        snapin: c(8, 8, 7, '#7b0', '#ffb') + p('M3 6h3v-3M13 6h-3v-3M3 10h3v3M13 10h-3v3M4 4l2 2M12 4l-2 2M4 12l2-2M12 12l-2-2', N),
        route: el(4, 3, 3, 2) + el(7, 3, 2, 2) + p('M6 13l8-7M14 9v-3h-3') + n('4,14 14,6'),
        world: c(7, 7, 6, B, B) + p('M3 4l4-2 2 3-4 4z', '#0c6', '#0c6') + p('M9 3h5v6l-5 6-3-2', '#000', '#fff') + p('M8 8l4 2', '#0c6'),
        bag: p('M1 8h10v7h-10z', '#000', R) + p('M2 2l9 6M6 1l3 6M10 3h4v8h-4z', '#000', '#865'),
        del: p('M3 2l10 12M13 2l-10 12', '#777', 'none', 'stroke-width="3"'),
        e1: p('M1 7h6v7h-6zM3 9h2v3h-2z', '#000', '#fff') + p('M3 7q2-6 11-5v3q-6 0-7 3', '#000', '#999') + p('M14 1v5', B),
        e2: p('M1 1h7v7h-7z', '#000', '#fff') + dash('M9 8h6v6h-6z') + p('M7 7h6M8 10v5M2 14L14 2'),
        e3: p('M1 14q2-8 7-6t5-7M8 8l-3-2') + p('M6 7h4M9 9l5 5M9 13v-4h4', '#48f'),
        w1: p('M1 1h14v13h-14z', '#000', '#088') + p('M2 1h13v12z', '#0f0', '#0f0') + p('M1 1h14v13h-14z'),
        w2: p('M2 1v13h13z', '#000', '#088') + t(6, 7, 'WP', 6),
        w3: p('M2 1v13h13z', '#000', '#0e0') + t(8, 7, 'CP', 6),
        w4: p('M2 3h7v3h3v6h-3v3M2 3v6h7', '#0d0', 'none', 'stroke-width="2"') + t(11, 7, 'F', 7),
        k1: p('M1 2l1 7 4-3q5-3 9 1l-2-4q-5-4-9 1z', '#000', '#0c0') + p('M9 8v7l2-2 2 3 1-3z', '#000', '#fff'),
        k2: p('M2 1h5v4z', R, R) + p('M9 14h5v-5z', B, B) + dash('M3 4l9 9', '#cc0'),
        k3: p('M1 12l6-10 5 10zM4 12l4-6 3 5') + p('M6 13l5-7 4 7z', R),
        k4: p('M5 6q0-5 4-5t4 5h-8M2 8h12M1 11h14v3h-14z'),
        k5: dash('M2 1h12v13h-12z') + p('M3 5h7v9h-7zM5 7h3v4h-3z', N) + p('M2 14L15 1', R),
        k6: p('M1 1h14v14h-14zM4 4l8 8M12 4l-8 8M4 6v-2h2M12 6v-2h-2'),
        k7: p('M1 6h8v9h-8zM4 8h3v4h-3zM6 6q3-5 8-4M4 9l2 2'),
        k8: p('M1 6h8v9h-8zM4 8h3v4h-3zM10 4h5M10 9h5M13 1v8'),
        k9: p('M2 2h12v12h-12z', '#000', '#ccc') + p('M5 4h6v7h-6z', N) + p('M2 14L14 2', R) + n('2,2 14,2 2,14 14,14', '#48f'),

        // snap modes
        s_no: c(8, 8, 5, '#555', '#fff') + p('M3 6l6-4 4 4M6 13l7-4M3 2h8', '#555') + p('M1 13l2 2M3 13l-2 2M13 1l2 2M15 1l-2 2', R),
        s_mid: p('M4 8h8M9 6l2 2-2 2') + n('2,8', '#666') + n('14,8', R),
        s_vert: p('M1 14l7-7 2-6') + dash('M10 3l4 11', '#fff') + n('9,2', '#444') + n('6,7', R),
        s_line: p('M2 14L15 1') + n('5,11 11,5', R),
        s_arc: p('M2 12A7 7 0 1 1 14 12') + n('8,9', R),
        s_box: p('M2 5h9v9h-9zM2 5l3-3h9v9l-3 3M11 5l3-3') + n('8,8', R),
        s_quad: c(8, 8, 7) + p('M8 3v10M3 8h10', '#bbb', 'none', 'stroke-dasharray="1 1"') + p('M8 0v3M8 13v3M0 8h3M13 8h3', R, 'none', 'stroke-width="2"'),
        s_x: p('M1 1l13 14M15 1l-14 13') + n('8,7', R),
        s_grid: [2, 6, 10, 14].map(y => p(`M1 ${y}h13`, '#000', 'none', 'stroke-dasharray="1 3"')).join('') + n('14,14', R),
        s_near: p('M2 7l6-5M2 8l4 4', '#555') + dash('M8 3l6 10', '#888') + n('6,8', R) + n('11,2', '#888'),
        s_trap: p('M2 14h12M4 5h8l2 7h-12z') + n('8,9', R),
        s_tan: p('M1 14q4-3 5-12M2 9L14 2') + n('7,7', R),
        s_perp: p('M1 13h14M8 5v8') + p('M6 1l4 3M10 1l-4 3', R) + n('8,12', R),
        s_perp2: p('M1 9h14M8 5v8') + p('M6 1l4 3M10 1l-4 3', R) + n('8,14', R),
        s_star: p('M8 1v14M1 8h14M3 3l10 10M13 3l-10 10', '#777') + p('M13 1h2v2', R),
        s_surf: p('M2 14l6-11v11z', '#000', '#555') + p('M8 8l5 1 2 4-5 1', '#555', '#fff') + n('8,12', R),
        s_mag: p('M5 9q-2-3-1-5t4-2 4 2-1 5', '#000', 'none', 'stroke-width="3"') + p('M3 15l5-4 5 4') + n('8,12', R),
        s_ext: p('M3 15v-12') + dash('M4 3h8v7') + n('3,3 11,9', R) + p('M12 10l3 5'),
        s_com: dash('M8 1l-3 7M8 1l3 7') + p('M4 10l-3 5M12 10l3 5') + n('5,9 11,9', R),
        // line tools
        l_multi: p('M4 7l4-4 4 4-4 5h3') + n('3,10 9,2 13,6 10,14'),
        l_poly: c(8, 8, 7) + p('M5 15h6') + n('2,4 8,8'),
        l_tri: p('M4 3l9 6-6 5z') + n('3,2 14,8 7,14'),
        l_rect: p('M2 2h12v12h-12z') + n('2,2 14,14'),
        l_rrect: p('M8 2l6 6-5 6-7-5z') + n('8,2 6,14') + p('M12 8h4M12 8v4', B),
        l_perp: p('M1 14L12 2M7 7l6 6') + n('7,7 14,14'),
        l_par: p('M1 10l9-9M5 15l10-10') + n('5,6 9,11'),
        l_t1: c(6, 10, 5) + p('M5 2l11 13') + n('10,6'),
        l_t2: p('M1 1q5 1 5 4T1 14M7 5l7 8') + n('6,5', R) + n('14,13'),
        l_t3: p('M1 1q6 1 6 6T1 14M7 4l8 8') + n('7,4') + n('14,13', R),
        l_t4: p('M1 1q4 0 6 4M1 6q4 0 4 8M14 6q-4 4-3 10M4 2l10 10') + n('6,4 13,12'),
        l_t5: p('M9 1v4M4 15q2-6-3-6M15 6h-5l-4 5') + n('10,5 5,10'),
        l_ang: p('M8 3v11M2 8l6 6 6-6') + n('8,2 2,8 14,8'),
        // circles
        c_rad: c(8, 8, 7) + n('8,8 15,8') + p('M6 15h5'),
        c_conc: c(8, 8, 7) + c(8, 8, 4) + n('8,8 12,8 15,8'),
        c_dbl: c(8, 8, 6) + n('2,8 14,8') + p('M6 15h5'),
        c_tan: c(9, 9, 6) + p('M1 4l5-3h5') + n('6,2 13,13'),
        c_tl: p('M1 1h14') + c(8, 8, 6) + dash('M8 1v12', G) + n('15,8 8,14'),
        c_3p: c(8, 8, 6) + n('4,3 12,3 8,14'),
        c_t3: c(8, 8, 6) + p('M1 2l4 4M3 15v-4') + n('8,2 3,9 13,12'),
        c_tt: p('M1 14L11 3M8 8q7-2 5 6M5 15v-3h4') + n('8,7 13,8 9,12'),
        e_rot: el(8, 9, 7, 4) + n('2,5 14,11'),
        e_fix: p('M3 13Q2 4 13 3Q14 11 3 13z') + n('13,2 8,8 3,14'),
        e_rat: el(8, 11, 7, 4) + t(3, 5, 'a.:b', 6, B),
        // arcs
        a_rad: p('M2 11A6 6 0 1 1 14 8') + dash('M4 12l4-4h6', G) + n('3,13 8,8 14,8'),
        a_con: p('M2 11A6 6 0 1 1 14 8M5 10A4 4 0 1 1 12 8') + n('3,13 8,8 14,8'),
        a_dbl: p('M2 8A6 6 0 1 0 13 4') + dash('M3 8h5l5-4', G) + n('2,7 13,3'),
        a_tan: p('M1 14L12 3M8 8q6-2 6 1') + dash('M3 2l10 12', G) + n('14,8 9,12'),
        a_123: p('M7 2q6 0 6 6t-6 6') + t(0, 6, '1', 7) + t(0, 15, '3', 7) + t(6, 10, '2', 6) + n('7,2 13,8 7,14'),
        a_132: p('M7 2q6 0 6 6t-6 6') + t(0, 6, '1', 7) + t(0, 15, '2', 7) + t(6, 10, '3', 6) + n('7,2 13,8 7,14'),
        a_t3: p('M9 2A6 6 0 1 0 13 10M1 4l3 1') + dash('M8 3h5l-3 4', G) + n('8,2 3,9 12,13'),
        a_tp: p('M1 13L13 1M8 6q6 1 5 4l-6 3') + n('8,6 10,13') + p('M4 15l3-3'),
        a_el: p('M2 13Q0 4 6 3T14 9') + dash('M4 13l4-4h6', G) + n('6,3 3,14 14,9'),
        a_er: el(8, 9, 7, 5) + p('M3 3l5 4 4-3') + n('2,3 7,5 12,4 15,12'),
        a_ef: p('M3 13Q2 4 14 2Q14 11 3 13z') + dash('M3 13L13 3') + n('14,2 12,8 8,12 2,14'),
        a_era: p('M1 13q1-5 7-5t7 5') + t(3, 5, 'a.:b', 6, B),
        // curves
        v_1: p('M1 14Q4 2 8 3T14 13') + n('1,14 14,13 3,1 13,1'),
        v_2: p('M13 3q-6 0-7 3t4 3q0 4-7 5') + n('13,2 5,6 9,9 3,14'),
        v_3: p('M1 14Q3 2 8 2T14 13') + n('1,14 14,13 4,3 12,3'),
        v_4: p('M2 13Q1 2 9 2t5 9q-6 2-6-2t3-4') + n('2,13 10,7'),
        v_5: p('M6 14h-4v-4l3-2v-5l3-2 3 1 1 5 2 3v4h-4l-2-3z', '#000', 'none', 'stroke-linejoin="round"'),
        v_6: p('M2 13l4-8 5 5 4-8') + n('2,13 6,2 15,2 10,14', '#000'),
        // double lines
        d_1: p('M1 8l7-7M8 15l7-8') + n('13,2 3,13'),
        d_2: p('M1 8l7-7 7 7M2 13l6-6 6 6') + n('2,10 14,10 8,6'),
        d_3: c(8, 8, 7) + c(8, 8, 4) + n('4,3 8,8') + p('M5 15h6'),
        d_4: p('M1 1h10l4 4v9h-10l-4-4zM4 4h6l2 2v5h-6l-2-2z') + n('4,3 9,3 3,8 14,8 7,12 13,13'),
        d_5: p('M1 1h14v14h-14zM5 5h6v5h-6zM1 14h14') + n('3,3 13,12'),
        d_6: p('M8 3l6 5-5 5-7-5zM8 6l3 2-3 3-3-3z') + n('8,2 6,14') + p('M12 9h4v4', B),
        d_7: p('M1 10l9-9M5 5l9 8M3 8l8 7') + n('5,5 13,12'),
        d_8: p('M1 10l8-9M5 11l8-9M7 15l8-9') + n('4,4 9,9'),
        // panel tabs
        t_prop: p('M1 6h9v9h-9z', '#000', '#fff') + p('M3 5l3-4h9v5l-5 3') + p('M3 9h5M3 11h5M3 13h5') + p('M14 1v5', N, 'none', 'stroke-width="2"'),
        t_mat: p('M0 0h15v15h-15z', '#777', '#bbb') + p('M8 3l5 3v5l-5 3-5-3v-5z', '#000', '#dd0') + p('M8 8v6M3 6l5 2 5-2'),
        t_gear: c(5, 5, 4, '#000', '#ffc') + c(11, 11, 4, '#000', '#ee0') + c(5, 5, 1) + c(11, 11, 1),
        t_sel: p('M2 1v12l3-3 2 4 2-1-2-4h4z', N, N) + n('12,9 12,14'),
    };

    const svg = k => `<svg class="size-4 overflow-visible" viewBox="0 0 16 16" fill="none" shape-rendering="crispEdges"><g transform="translate(.5 .5)">${icons[k] || ''}</g></svg>`;
    const corner = '<svg class="absolute right-0 bottom-0 size-[4px]" viewBox="0 0 4 4"><path d="M4 0v4h-4z"/></svg>';
    const button = s => {
        const key = s.replace(/[-!^]/g, '');
        const look = s.includes('-') ? 'grayscale opacity-40' : s.includes('!') ? '' : 'opacity-70';
        const bg = s.includes('!') ? 'bg-[#cce8ff] border border-[#99d1ff]' : '';
        return `<button class="relative size-[22px] shrink-0 flex items-center justify-center ${bg}" aria-label="${key}"><span class="${look}">${svg(key)}</span>${s.includes('^') ? corner : ''}</button>`;
    };
    const row = list => list.split(' ').map(s =>
        s === '|' ? '<span class="w-px h-[22px] mr-[3px] ml-[2px] shrink-0 bg-[#888]"></span>' :
        s === '_' ? '<span class="w-[22px]"></span>' : button(s)).join('');

    document.querySelectorAll('[data-icons]').forEach(e => { e.className = 'flex items-center'; e.innerHTML = row(e.dataset.icons); });
    document.querySelectorAll('[data-bar]').forEach(e => {
        e.className = 'flex items-center border-b border-r border-[#aaaaaa] mr-px shrink-0';
        e.insertAdjacentHTML('afterbegin', '<span class="w-[10px] self-stretch flex justify-center py-px"><span class="border-l-2 border-dotted border-[#c4c4c4]"></span></span>' + row(e.dataset.bar));
    });
    document.querySelectorAll('[data-col]').forEach(e => {
        e.classList.add('flex', 'flex-col', 'items-center');
        e.innerHTML = '<span class="w-[22px] mt-[3px] mb-[4px] border-t-2 border-dotted border-[#c4c4c4]"></span>' + e.dataset.col.split(' ').map(s =>
            s === '|' ? '<span class="h-px w-[18px] mt-[2px] mb-[3px] bg-[#888]"></span>' : button(s)).join('');
    });
    document.querySelectorAll('[data-combo]').forEach((e, i) => {
        const v = e.dataset.combo;
        e.classList.add('flex', 'h-[24px]', 'border', 'border-[#a8a8a8]', 'bg-white', 'shrink-0');
        const btn = v === 'Sketch' ? 'bg-[#e1e1e1] text-[#444]' : 'bg-[#cdcdcd] text-[#999]';
        e.innerHTML = `<select class="flex-1 min-w-0 appearance-none outline-none pl-[2px] ${v === 'off' ? 'm-[2px] bg-[#f0f0f0]' : ''}" aria-label="List ${i + 1}" ${v === 'Sketch' ? '' : 'disabled'}><option>${v === 'Sketch' ? v : ''}</option></select>
            <span class="w-[18px] flex items-center justify-center border-l border-[#a8a8a8] ${btn}"><svg class="w-[9px] h-[6px]" viewBox="0 0 9 6" fill="none" stroke="currentColor"><path d="M.5 .5l4 4 4-4"/></svg></span>`;
    });
    document.querySelectorAll('[data-head]').forEach(e => {
        e.className = 'flex items-center gap-[4px]';
        e.innerHTML = `<svg class="size-[16px]" viewBox="0 0 16 16" stroke="#888"><path d="M1 15l4-4" stroke-width="2"/><ellipse cx="7" cy="9" rx="5" ry="4.500" fill="#ccc"/><circle cx="11" cy="5" r="4" fill="url(#ball)"/></svg>
            <button class="size-[15px] flex items-center justify-center rounded-[2px] bg-[#aaa] border border-[#eee]" aria-label="Close panel"><svg class="size-[7px]" viewBox="0 0 7 7" stroke="#fff" stroke-width="2"><path d="M.5 .5l6 6M6.500 .5l-6 6"/></svg></button>`;
    });

    // tool groups
    const groups = [
        ['Snap Modes', 's_no s_mid! s_vert! s_line s_arc! s_box s_quad s_x! s_grid s_near s_trap s_tan s_perp s_perp2 s_star s_surf s_mag! s_ext! s_com! mirror'],
        ['Line', 'line l_multi l_poly l_tri l_rect l_rrect l_perp l_par l_t1 l_t2 l_t3 l_t4 l_t5 l_ang'],
        ['Circle/Ellipse', 'c_rad c_conc c_dbl c_tan c_tl c_3p c_t3 c_tt e_rot e_fix e_rat'],
        ['Arc', 'a_rad a_con a_dbl a_tan a_123 a_132 a_t3 c_tt a_tp a_el a_er a_ef a_era'],
        ['Curve', 'v_1 v_2 v_3 v_4 v_4 v_5 v_6-'],
        ['Double Line', 'd_1 d_2 d_3 d_4 d_5 d_6 d_7 d_8'],
        ['Multiline', ''], ['Dimension', ''],
    ];
    document.getElementById('groups').innerHTML = groups.map(([name, list]) => `
        <div>
            <div class="flex items-center h-[25px] pl-[13px] pr-[5px] rounded-t-[3px] bg-linear-to-r from-white to-[#e4e9f1]">
                <h3 class="flex-1 pt-[3px] font-bold text-[#0a5ba6]">${name}</h3>
                <button class="size-[16px] rounded-full bg-white border border-[#c3cfe0] flex items-center justify-center" aria-label="Toggle ${name}">
                    <svg class="w-[7px] h-[9px]" viewBox="0 0 7 9" fill="none" stroke="#0a4a96" stroke-width="1.500"><path d="${list ? 'M.5 4l3-3 3 3M.5 8l3-3 3 3' : 'M.5 1l3 3 3-3M.5 5l3 3 3-3'}"/></svg>
                </button>
            </div>
            ${list ? `<div class="grid grid-cols-[repeat(8,28px)] pl-[10px] pt-[8px] pb-[7px] bg-[#f3f5fa] border-b border-white border-x">${list.split(' ').map(s =>
                `<button class="size-[28px] flex items-center justify-center ${s.includes('!') ? 'bg-[#ffc070] border border-[#000080]' : ''} ${s.includes('-') ? 'grayscale opacity-30' : ''}" aria-label="${s.replace(/[-!]/, '')}">${svg(s.replace(/[-!]/, ''))}</button>`).join('')}</div>` : ''}
        </div>`).join('');

    document.getElementById('ptabs').innerHTML = [['t_prop', 'S...'], ['group', 'B..'], ['t_mat', 'M.'], ['t_gear', 'D..'], ['t_sel', 'S...'], ['bag', 'T...']].map(([k, s], i) =>
        `<button role="tab" class="flex items-center gap-[3px] pl-[4px] h-[20px] border-r border-[#d4d4d4] ${i === 5 ? 'w-[45px] bg-white' : 'w-[42px]'}">${svg(k)}${s}</button>`).join('');

    // inspector fields
    document.getElementById('fields').innerHTML = [['Scale X', '1'], ['Scale Y', '1'], ['Size X', '0 mm'], ['Size Y', '0 mm'], ['Pos X', '0 mm'], ['Pos Y', '0 mm'], ['Delta X', '0 mm'], ['Delta Y', '0 mm'], ['Rot', '0'], ['Delta Dist', '0 mm'], ['Delta Ang', '0']].map(([l, v], i) => {
        const spin = !v.includes('mm');
        return `<div class="w-[55px] pr-[5px]">
            <label for="f${i}" class="block h-4 whitespace-nowrap">${l}</label>
            <div class="flex"><input id="f${i}" value="${v}" disabled class="flex-1 min-w-0 h-[18px] pl-[3px] bg-[#f0f0f0] text-[#777] border-t border-l border-[#a0a0a0]">
            ${spin ? `<span class="w-[14px] flex flex-col gap-px">${['M0 3l2.500-3 2.500 3z', 'M0 0l2.500 3 2.500-3z'].map(d => `<span class="flex-1 border border-[#ddd] flex items-center justify-center"><svg class="w-[5px] h-[3px]" viewBox="0 0 5 3" fill="#666"><path d="${d}"/></svg></span>`).join('')}</span>` : ''}</div>
        </div>`;
    }).join('');

    document.getElementById('coords').innerHTML = [['X', '824,693688 mm'], ['Y', '928,464244 mm'], ['Z', '96,560053 mm']].map(([a, v]) => `
        <div class="flex items-center gap-[2px]">
            <label for="c${a}" class="flex flex-col items-center w-[9px] text-[9px] leading-[9px]"><span class="size-[8px] border border-black bg-white"></span>${a}</label>
            <input id="c${a}" value="${v}" class="w-[73px] h-[19px] pl-[4px] bg-white border border-black ${a === 'Y' ? 'text-[#999]' : ''}">
        </div>`).join('');

    // rulers: 10 mm steps
    const mm = 1.447, text = (s, x, y, r = '') => `<text x="${x}" y="${y}" ${r} font-size="8" fill="#444" font-family="Liberation Sans, sans-serif" text-rendering="geometricPrecision">${s}</text>`;
    let h = '', v = '';
    for (let i = -1; i <= 152; i++) {
        const x = Math.round(22 + i * 10 * mm), len = i % 10 === 0 ? 12 : i % 5 === 0 ? 6 : 3;
        h += `<path d="M${x + .5} ${14 - len}v${len}" stroke="#000"/>`;
        if (i % 10 === 0) h += text(`${i * 10} mm`, x + 2, 9);
    }
    h += '<path d="M1215.500 0v14" stroke="#d020d0"/>';
    for (let i = -24; i <= 57; i++) {
        const y = Math.round(830 - i * 10 * mm), len = i % 10 === 0 ? 12 : i % 5 === 0 ? 5 : 3;
        v += `<path d="M${13 - len} ${y + .5}h${len}" stroke="#000"/>`;
        if (i % 10 === 0) v += text(`${i * 10} mm`, 9, y - 2, `transform="rotate(-90 9 ${y - 2})"`);
    }
    v += '<path d="M0 690.500h13" stroke="#d020d0"/>';
    document.getElementById('hruler').innerHTML = h;
    document.getElementById('vruler').innerHTML = v;
</script>
</body>
</html>
